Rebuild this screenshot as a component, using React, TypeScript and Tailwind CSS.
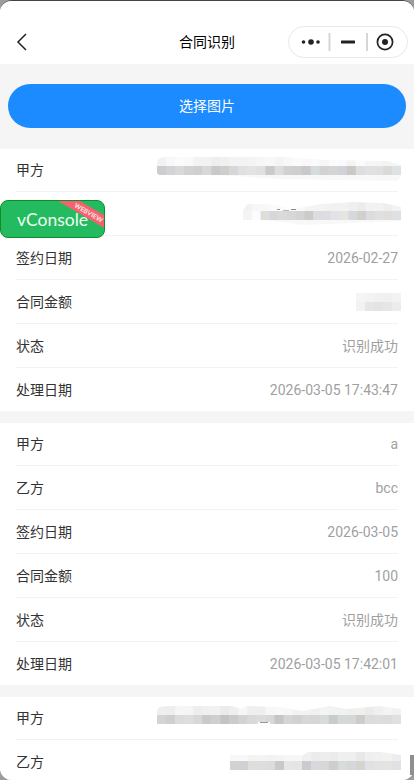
import type { ReactNode } from 'react'

interface MosaicProps {
  width: number
  top: string[]
  bottom: string[]
  wisp: string
  cut?: string
  height: number
  topY: number
  children?: ReactNode
}

// blurred-out values in the screenshot, two rows of 9px cells under a soft smear
function Mosaic({ width, top, bottom, wisp, cut, height, topY, children }: MosaicProps) {
  const cell = width / bottom.length
  return (
    <svg width={width} height={height} viewBox={`0 0 ${width} ${height}`} className="shrink-0 -mr-[3px]">
      <path d={wisp} fill="#f8f8f8" />
      {top.map((c, i) => (
        <rect key={i} x={i * cell} y={topY} width={cell + 0.5} height={9} fill={c} />
      ))}
      {bottom.map((c, i) => (
        <rect key={i} x={i * cell} y={topY + 9} width={cell + 0.5} height={9} fill={c} />
      ))}
      {cut && <path d={cut} fill="#fff" />}
      {children}
    </svg>
  )
}

const mosaicA = (
  <Mosaic
    width={244}
    height={26}
    topY={0}
    wisp="M0 16 L0 6 Q0 0 8 0 L120 0 L170 3 L240 4 L244 8 L244 20 L240 24 L120 22 L80 19 Z"
    cut="M0 0 L8 0 Q0 0 0 6 Z M125 0 L170 3 L230 4 L244 8 L244 0 Z M0 16 L0 19 L3 19 Z"
    top={['#f2f2f2', '#f8f8f8', '#fbfbfb', '#f9f9f9', '#f3f3f3', '#f2f2f2', '#eeeeee', '#f0f0f0', '#f3f3f3', '#f3f3f3', '#f4f4f4', '#f6f6f6', '#f8f8f8', '#f4f4f4', '#f8f8f8', '#fbfbfb', '#f9f9f9', '#fafafa', '#f6f6f6', '#fbfbfb', '#fafafa', '#f4f4f4', '#fbfbfb', '#f6f6f6', '#f5f5f5', '#f3f3f3', '#f4f4f4']}
    bottom={['#cdcdcd', '#d3d3d7', '#dad8d8', '#d2d2d4', '#cfcfcf', '#d8d8d8', '#c8c9cb', '#cfcecb', '#d7d7d7', '#dfe0e2', '#e3e3e3', '#e0e0e0', '#c9c9ce', '#dddddd', '#d0d1d1', '#cfcfcf', '#c9c8cb', '#d5dcdc', '#d3d2d3', '#d5d5d5', '#cfd3d8', '#cbc9c6', '#dcdddf', '#e0e1e2', '#e0e0e0', '#dcdad8', '#dde2e3']}
  />
)

const mosaicB = (
  <Mosaic
    width={158}
    height={26}
    topY={1}
    wisp="M0 18 L0 4 L158 4 L158 20 L60 24 L30 20 Z"
    cut="M0 10 L4 3 L26 3 L50 8 L78 3 L110 1 L140 2 L158 6 L158 0 L0 0 Z"
    top={['#f2f2f2', '#f7f7f7', '#f8f8f8', '#fafafa', '#fafafa', '#fbfbfb', '#f8f8f8', '#f4f4f4', '#f4f4f4', '#f2f2f2', '#f1f1f1', '#f2f2f2', '#eeeff1', '#ececea', '#f2f2f2', '#f2f2f2', '#eeeeee', '#f2f2f2']}
    bottom={['#f4f4f4', '#fbfcfd', '#dfdedb', '#d7d7db', '#dbd9d9', '#d6d8d8', '#d3d3d5', '#cbcbc9', '#dcdde0', '#dddee1', '#e3e3e5', '#e6e5e2', '#d5d9da', '#d0d1cc', '#dcdcde', '#dfe0e2', '#e0dedb', '#dde1e2']}
  >
    <rect x="34" y="8" width="3" height="1" fill="#999" />
    <rect x="40" y="9" width="6" height="1" fill="#bbb" />
    <rect x="48" y="8" width="5" height="1" fill="#888" />
  </Mosaic>
)

const mosaicC = (
  <Mosaic
    width={45}
    height={18}
    topY={0}
    wisp="M0 0 L45 0 L45 18 L0 18 Z"
    top={['#f6f5f4', '#f3f3f3', '#f1f1f1', '#f1f0ef', '#f3f3f4']}
    bottom={['#f3f2f1', '#e6e6e6', '#e3e3e4', '#e6e6e6', '#ececed']}
  />
)

const mosaicD = (
  <Mosaic
    width={244}
    height={24}
    topY={0}
    wisp="M0 0 L244 0 L244 18 L0 18 Z"
    cut="M0 6 Q0 0 8 0 L76 0 L84 3 L90 0 L123 1 L145 5 L173 0 L190 3 L223 0 L244 3 L244 0 L0 0 Z"
    top={['#efeff0', '#eeeeee', '#f6f6f6', '#f5f5f5', '#eeeeee', '#f0f0f0', '#f1f1f1', '#ebebeb', '#efefef', '#f6f6f6', '#efefef', '#efefef', '#f7f7f7', '#f8f8f8', '#f7f7f7', '#f2f2f2', '#f3f3f3', '#f0f0f0', '#f4f4f4', '#f2f2f2', '#f1f1f1', '#efefef', '#f0f0f0', '#ebebe8', '#f0f0f0', '#f4f4f4', '#f1f1f1']}
    bottom={['#d4d4d4', '#cfcfcf', '#dcdce0', '#dfdddd', '#d8d8d8', '#c9cacc', '#cfcfd0', '#c2c3c7', '#cbcbc9', '#d3d3d3', '#d9d9d9', '#dcdcdc', '#d8d8d8', '#c6c6c6', '#d5d5d5', '#d0d1d2', '#d9d7d4', '#d5d7d6', '#d6dcdc', '#cbcbcb', '#d5d8d6', '#d3d9da', '#cdcdc8', '#dcdcde', '#dddddd', '#dedcda', '#dde1e2']}
  >
    <rect x="101" y="16" width="12" height="2" fill="#fff" />
    <rect x="103" y="16" width="8" height="1" fill="#8d96a6" />
  </Mosaic>
)

const mosaicE = (
  <Mosaic
    width={171}
    height={20}
    topY={0}
    wisp="M0 0 L171 0 L171 17 L0 17 Z"
    cut="M0 0 L0 3 L73 3 L78 0 Z M150 0 L171 3 L171 0 Z"
    top={['#f7f7f7', '#f8f8f8', '#f3f3f3', '#f4f4f4', '#f2f2f2', '#f4f4f4', '#f6f6f6', '#f6f6f6', '#f0f0f0', '#ebebeb', '#ededed', '#ebebeb', '#efefef', '#efefef', '#e8e8e8', '#efefef', '#f0f0f0', '#f2f2f0', '#ededef']}
    bottom={['#d2d2d2', '#cfd1d4', '#e0dddd', '#dedcde', '#dcdcdc', '#c9c9cb', '#e6e6e6', '#e5e5e5', '#cbcbcb', '#d8d9dc', '#d5d7d9', '#cececf', '#d9dbdb', '#d3d9db', '#d5d4cf', '#dfe1e3', '#e1e3e4', '#e6e4e2', '#dfe1e3']}
  />
)

const cards = [
  [
    ['甲方', mosaicA],
    ['乙方', mosaicB],
    ['签约日期', '2026-02-27'],
    ['合同金额', mosaicC],
    ['状态', '识别成功'],
    ['处理日期', '2026-03-05 17:43:47'],
  ],
  [
    ['甲方', 'a'],
    ['乙方', 'bcc'],
    ['签约日期', '2026-03-05'],
    ['合同金额', '100'],
    ['状态', '识别成功'],
    ['处理日期', '2026-03-05 17:42:01'],
  ],
  [
    ['甲方', mosaicD],
    ['乙方', mosaicE],
  ],
] as const

function Capsule() {
  return (
    <div className="flex h-8 w-[120px] items-center justify-self-end mr-1.5 rounded-full border border-[#e9e9e9] bg-white">
      <svg width="120" height="32" viewBox="0 0 120 32" className="shrink-0 -mx-px">
        <circle cx="15.5" cy="16" r="1.8" fill="#222" />
        <circle cx="23" cy="16" r="2.8" fill="#222" />
        <circle cx="30" cy="16" r="1.8" fill="#222" />
        <rect x="40.5" y="7" width="2" height="18" fill="#d6d6d6" />
        <rect x="53" y="14.5" width="14" height="3" rx="0.5" fill="#222" />
        <rect x="78" y="7" width="2" height="18" fill="#d6d6d6" />
        <circle cx="97" cy="16" r="7.6" fill="none" stroke="#222" strokeWidth="1.7" />
        <circle cx="97" cy="16" r="3" fill="#222" />
      </svg>
    </div>
  )
}

export default function App() {
  return (
    <div className="relative h-[780px] w-[414px] overflow-hidden bg-[#9c9c9c] font-['Roboto','Noto_Sans_CJK_SC',sans-serif] text-sm">
      <div className="h-full overflow-hidden rounded-xl border-t border-[#444] bg-[#f5f5f5]">
        <header className="grid h-[63px] grid-cols-[1fr_auto_1fr] items-center bg-white pt-[19px]">
          <svg width="12" height="18" viewBox="0 0 12 18" fill="none" className="ml-4">
            <path d="M10 1 L2 9 L10 17" stroke="#222" strokeWidth="1.5" />
          </svg>
          <h1 className="font-normal text-black">合同识别</h1>
          <Capsule />
        </header>

        <div className="px-2 pt-5 pb-[21px]">
          <button className="h-11 w-full rounded-full bg-[#1b8bff] text-white">选择图片</button>
        </div>

        <div className="flex flex-col gap-3">
          {cards.map((rows, i) => (
            <section key={i} className="bg-white px-4">
              {rows.map(([label, value], j) => (
                <div
                  key={j}
                  className="flex h-11 items-center justify-between border-b border-[#f3f3f3] text-[#9f9f9f] first:h-[43px] last:h-[43px] last:border-b-0"
                >
                  <span className="text-[#333]">{label}</span>
                  {value}
                </div>
              ))}
            </section>
          ))}
        </div>
      </div>

      {/* vConsole floating switch */}
      <div className="absolute top-[200px] left-0 flex h-[38px] w-[105px] items-center justify-center overflow-hidden rounded-lg border border-[#0d8f27] bg-[#24bb60] text-[17.5px] text-[#eefbf2] font-['Lato',sans-serif]">
        vConsole
        <div className="absolute top-[5px] -right-[19px] w-[72px] rotate-[30deg] bg-[#f4626f] pl-1 text-center text-[6.5px] leading-[11px] font-bold text-[#fde3e5]">
          WEBVIEW
        </div>
      </div>

      {/* sliver of the page behind the sheet */}
      <div className="absolute top-[755px] right-0 h-5 w-1 bg-[#8f8f8f]" />
    </div>
  )
}
